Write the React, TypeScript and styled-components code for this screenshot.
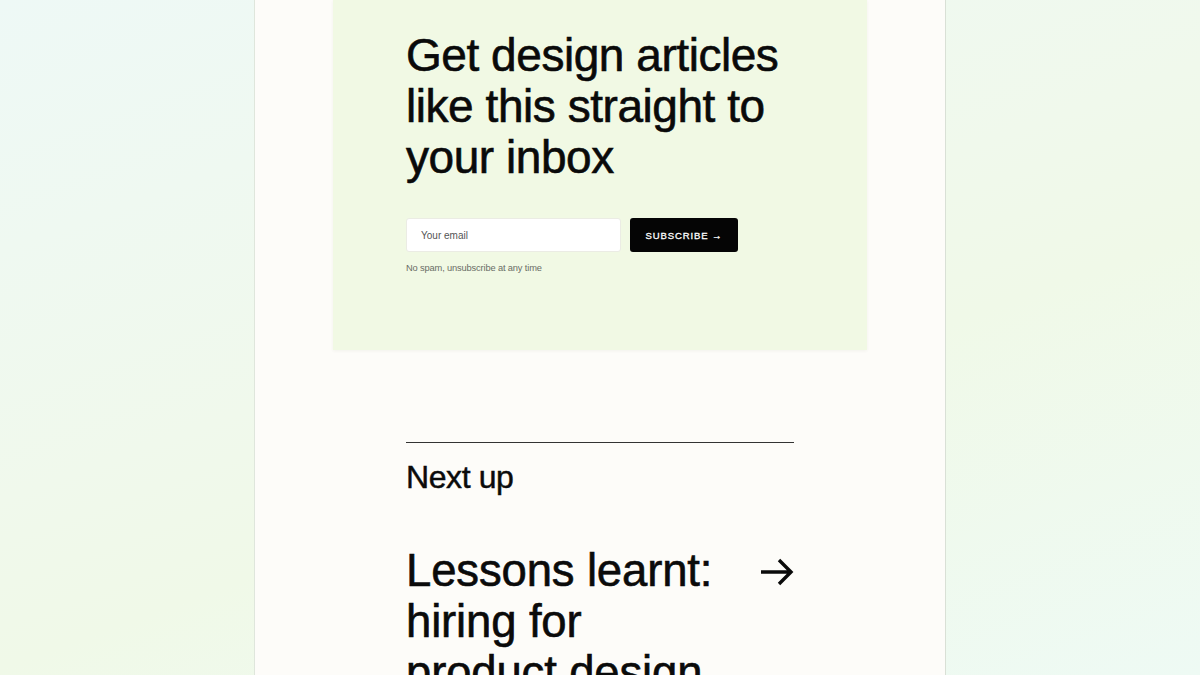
import React from "react";
import styled, { createGlobalStyle } from "styled-components";

const Global = createGlobalStyle`
  html, body { margin: 0; padding: 0; height: 100%; overflow: hidden; }
  body {
    font-family: "Liberation Sans", Arial, sans-serif;
    color: #0b0b0b;
    background: linear-gradient(160deg, #eef9f6 0%, #f0f9ec 45%, #f0f9e8 60%, #eefaf4 100%);
  }
  * { box-sizing: border-box; }
`;

const Page = styled.div`
  display: flex;
  justify-content: center;
  min-height: 100vh;
`;

const Panel = styled.main`
  width: 692px;
  min-height: 1100px;
  background: #fdfcf9;
  border-left: 1px solid #dfe6dc;
  border-right: 1px solid #d9e0d6;
  padding: 0 78px;
`;

const Card = styled.section`
  width: 534px;
  height: 350px;
  background: #f1f9e4;
  box-shadow: 0 1px 3px rgba(60, 80, 40, 0.06);
  padding: 30px 0 0 73px;
`;

const Heading = styled.h2`
  width: 390px;
  margin: 0;
  font-size: 46px;
  line-height: 51px;
  font-weight: 400;
  letter-spacing: -0.45px;
  -webkit-text-stroke: 0.6px #0a0a0a;
  color: #0a0a0a;
`;

const Form = styled.form`
  display: flex;
  gap: 9px;
  margin-top: 35px;
`;

const EmailInput = styled.input`
  width: 215px;
  height: 34px;
  border: 1px solid #ebece4;
  border-radius: 3px;
  background: #ffffff;
  padding: 0 14px;
  font-family: "Liberation Sans", Arial, sans-serif;
  font-size: 10px;
  color: #222;
  outline: none;
  &::placeholder { color: #555; }
`;

const SubscribeButton = styled.button`
  width: 108px;
  height: 34px;
  border: none;
  border-radius: 3px;
  background: #050505;
  color: #ffffff;
  font-family: "Liberation Sans", Arial, sans-serif;
  font-size: 9.5px;
  font-weight: 400;
  letter-spacing: 0.9px;
  -webkit-text-stroke: 0.3px #ffffff;
  cursor: pointer;
`;

const Note = styled.p`
  margin: 11px 0 0;
  font-size: 9.3px;
  color: #6a6d66;
  letter-spacing: -0.15px;
`;

const NextSection = styled.section`
  width: 388px;
  margin: 92px 0 0 73px;
  border-top: 1.5px solid #333333;
`;

const NextLabel = styled.h3`
  margin: 16px 0 0;
  font-size: 32px;
  line-height: 36px;
  font-weight: 400;
  letter-spacing: -0.4px;
  -webkit-text-stroke: 0.45px #0a0a0a;
`;

const TitleRow = styled.a`
  display: flex;
  justify-content: space-between;
  align-items: flex-start;
  margin-top: 50px;
  color: inherit;
  text-decoration: none;
`;

const Title = styled.h4`
  width: 330px;
  margin: 0;
  font-size: 45.5px;
  line-height: 51px;
  font-weight: 400;
  letter-spacing: -0.15px;
  -webkit-text-stroke: 0.6px #0a0a0a;
`;

const ArrowIcon = styled.svg`
  margin-top: 13px;
  flex: none;
`;

export default function App() {
  return (
    <>
      <Global />
      <Page>
        <Panel>
          <Card>
            <Heading>Get design articles like this straight to your inbox</Heading>
            <Form onSubmit={(e) => e.preventDefault()}>
              <EmailInput type="email" placeholder="Your email" />
              <SubscribeButton type="submit">SUBSCRIBE →</SubscribeButton>
            </Form>
            <Note>No spam, unsubscribe at any time</Note>
          </Card>
          <NextSection>
            <NextLabel>Next up</NextLabel>
            <TitleRow href="#">
              <Title>Lessons learnt: hiring for product design</Title>
              <ArrowIcon width="34" height="28" viewBox="0 0 34 28" fill="none">
                <path d="M1 14H31M19 2L31 14L19 26" stroke="#0a0a0a" strokeWidth="3.4" />
              </ArrowIcon>
            </TitleRow>
          </NextSection>
        </Panel>
      </Page>
    </>
  );
}
